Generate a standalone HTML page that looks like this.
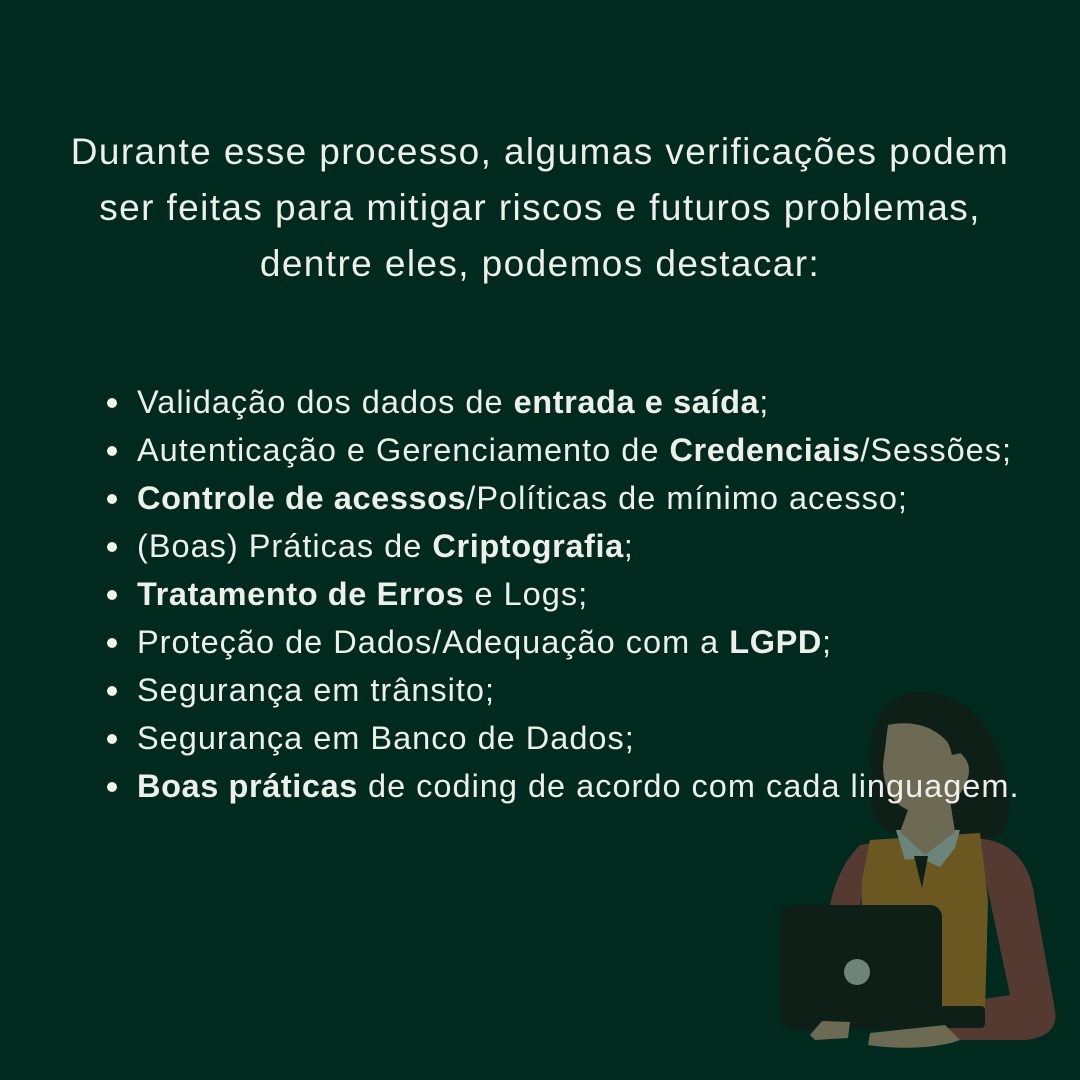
<!DOCTYPE html>
<html><head><meta charset="utf-8"><style>
html,body{margin:0;padding:0}
body{width:1080px;height:1080px;background:#012a1f;position:relative;overflow:hidden;font-family:"Liberation Sans",sans-serif;color:#eeeeea}
.h{position:absolute;left:0;width:1080px;top:124px;text-align:center;font-size:37px;line-height:56px;font-weight:300;letter-spacing:1.4px}
ul{position:absolute;left:137px;top:378px;margin:0;padding:0;list-style:none;font-size:32.5px;line-height:48px;white-space:nowrap;z-index:2;letter-spacing:1px}
li{position:relative}
li:before{content:"";position:absolute;left:-30px;top:20px;width:10px;height:10px;border-radius:50%;background:#f2f2ee}
b{font-weight:700;letter-spacing:0.6px}
svg{position:absolute;left:0;top:0;z-index:1}
</style></head><body>
<svg width="1080" height="1080" viewBox="0 0 1080 1080">
<path d="M905 694 C950 685 990 715 1000 760 C1010 790 1015 820 1000 835 C980 845 940 840 910 830 C880 830 865 800 872 770 C865 740 875 705 905 694Z" fill="#0e1f17"/>
<path d="M872 770 C868 800 870 825 895 835 L905 815 L885 790Z" fill="#0e1f17"/>
<path d="M975 838 C1010 840 1030 860 1035 900 L1055 1010 C1058 1030 1045 1038 1025 1040 L950 1040 L945 1005 L1010 995 L990 900Z" fill="#553a31"/>
<path d="M872 843 L860 845 C845 860 835 880 830 905 L860 905Z" fill="#553a31"/>
<path d="M870 840 L980 833 L988 900 L985 1015 L860 1015 L862 880Z" fill="#6b5820"/>
<path d="M896 830 L960 830 L955 848 L940 867 L920 858 L905 860Z" fill="#6d847a"/>
<path d="M914 856 L928 856 L922 888Z" fill="#0e1f17"/>
<path d="M908 810 L950 800 L955 832 L925 855 L900 832Z" fill="#6d6a54"/>
<path d="M888 725 C910 720 935 725 950 745 C965 755 975 765 965 785 C955 805 940 815 915 812 C895 808 883 790 883 765Z" fill="#6d6a54"/>
<path d="M885 720 C910 710 945 720 952 755 L975 750 C975 720 960 700 930 698 C905 698 888 705 885 720Z" fill="#0e1f17"/>
<rect x="780" y="905" width="162" height="125" rx="12" fill="#0e1f17"/>
<circle cx="857" cy="972" r="13" fill="#6d847a"/>
<rect x="940" y="1006" width="45" height="22" rx="4" fill="#0e1f17"/>
<path d="M870 1033 L945 1025 L960 1040 C940 1048 900 1050 868 1045Z" fill="#6d6a54"/>
<path d="M810 1035 L822 1021 L850 1022 L848 1038 L815 1040Z" fill="#6d6a54"/>
</svg>
<div class="h">Durante esse processo, algumas verificações podem<br>ser feitas para mitigar riscos e futuros problemas,<br>dentre eles, podemos destacar:</div>
<ul>
<li>Validação dos dados de <b>entrada e saída</b>;</li>
<li>Autenticação e Gerenciamento de <b>Credenciais</b>/Sessões;</li>
<li><b>Controle de acessos</b>/Políticas de mínimo acesso;</li>
<li>(Boas) Práticas de <b>Criptografia</b>;</li>
<li><b>Tratamento de Erros</b> e Logs;</li>
<li>Proteção de Dados/Adequação com a <b>LGPD</b>;</li>
<li>Segurança em trânsito;</li>
<li>Segurança em Banco de Dados;</li>
<li><b>Boas práticas</b> de coding de acordo com cada linguagem.</li>
</ul>
</body></html>
